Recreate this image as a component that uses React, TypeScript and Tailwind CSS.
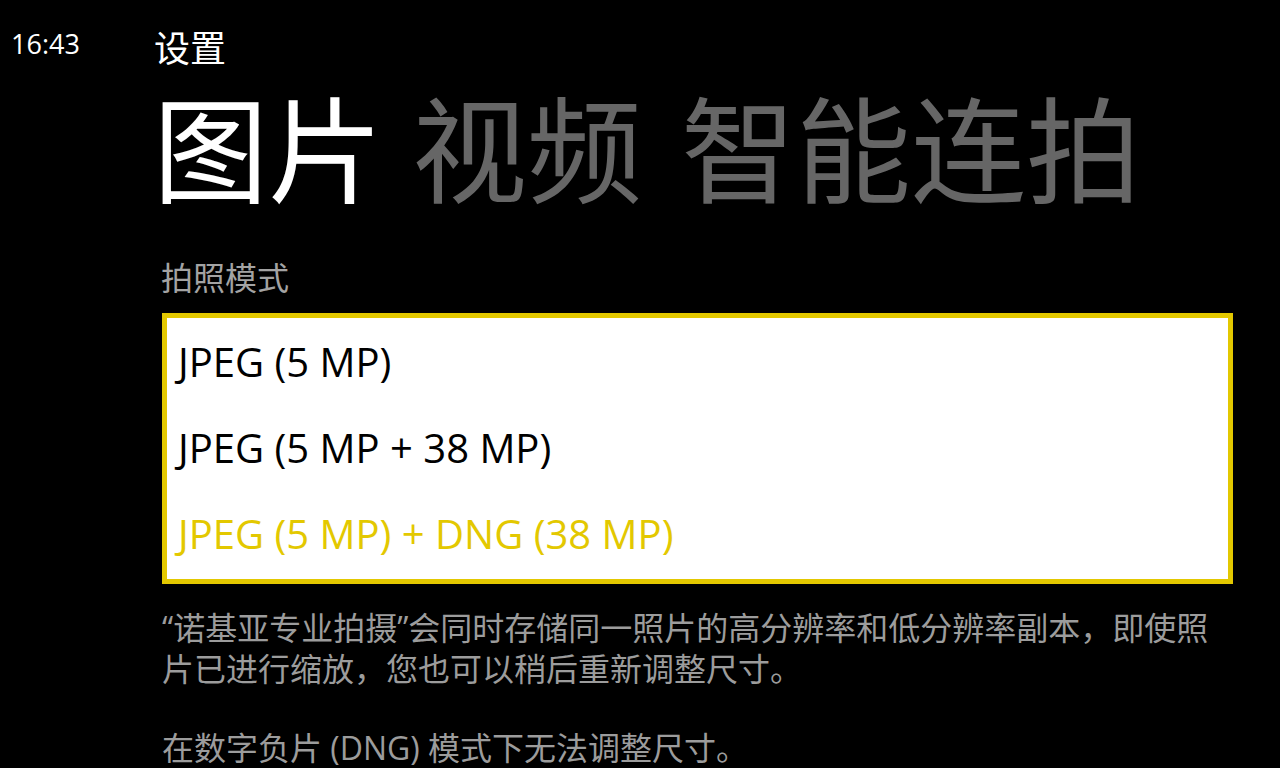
const latin = "font-['Open_Sans','Noto_Sans_CJK_SC',sans-serif]";

const modes = [
  { label: 'JPEG (5 MP)', selected: false },
  { label: 'JPEG (5 MP + 38 MP)', selected: false },
  { label: 'JPEG (5 MP) + DNG (38 MP)', selected: true },
];

function ModeList() {
  return (
    <div className="border-[5px] border-[#e3c800] bg-white flex flex-col pt-[1px] pb-[2px]">
      {modes.map((m) => (
        <div
          key={m.label}
          className={`h-[86px] flex items-center pl-[11px] text-[40px] leading-none ${m.selected ? 'text-[#e3c800]' : 'text-black'}`}
        >
          {m.label}
        </div>
      ))}
    </div>
  );
}

export default function App() {
  return (
    <div className={`w-[1280px] h-[768px] bg-black text-white overflow-hidden flex ${latin}`}>
      {/* Status column */}
      <div className="w-[155px] shrink-0 pl-[11px] pt-[30px]">
        <div className="text-[27px] leading-none">16:43</div>
      </div>

      {/* Settings */}
      <div className="flex-1 flex flex-col">
        <div className="pt-[31px] -ml-[1px] text-[36px] leading-none">设置</div>

        {/* Pivot headers */}
        <div className="flex mt-[25px] -ml-[2px] text-[115px] leading-none whitespace-nowrap">
          <span className="text-white">图片</span>
          <span className="ml-[29px] text-[#666666]">视频</span>
          <span className="ml-[39px] text-[#666666]">智能连拍</span>
        </div>

        <div className="w-[1071px] ml-[7px] mt-[55px]">
          <div className="text-[32px] leading-none text-[#a3a3a3] -ml-[1px] mb-[19px]">拍照模式</div>
          <ModeList />
          <div className="mt-[23px] text-[32px] leading-[41px] text-[#9c9c9c]">
            <p>
              “诺基亚专业拍摄”会同时存储同一照片的高分辨率和低分辨率副本，即使照
              <br />
              片已进行缩放，您也可以稍后重新调整尺寸。
            </p>
            <p className="mt-[38px]">在数字负片 (DNG) 模式下无法调整尺寸。</p>
          </div>
        </div>
      </div>
    </div>
  );
}
